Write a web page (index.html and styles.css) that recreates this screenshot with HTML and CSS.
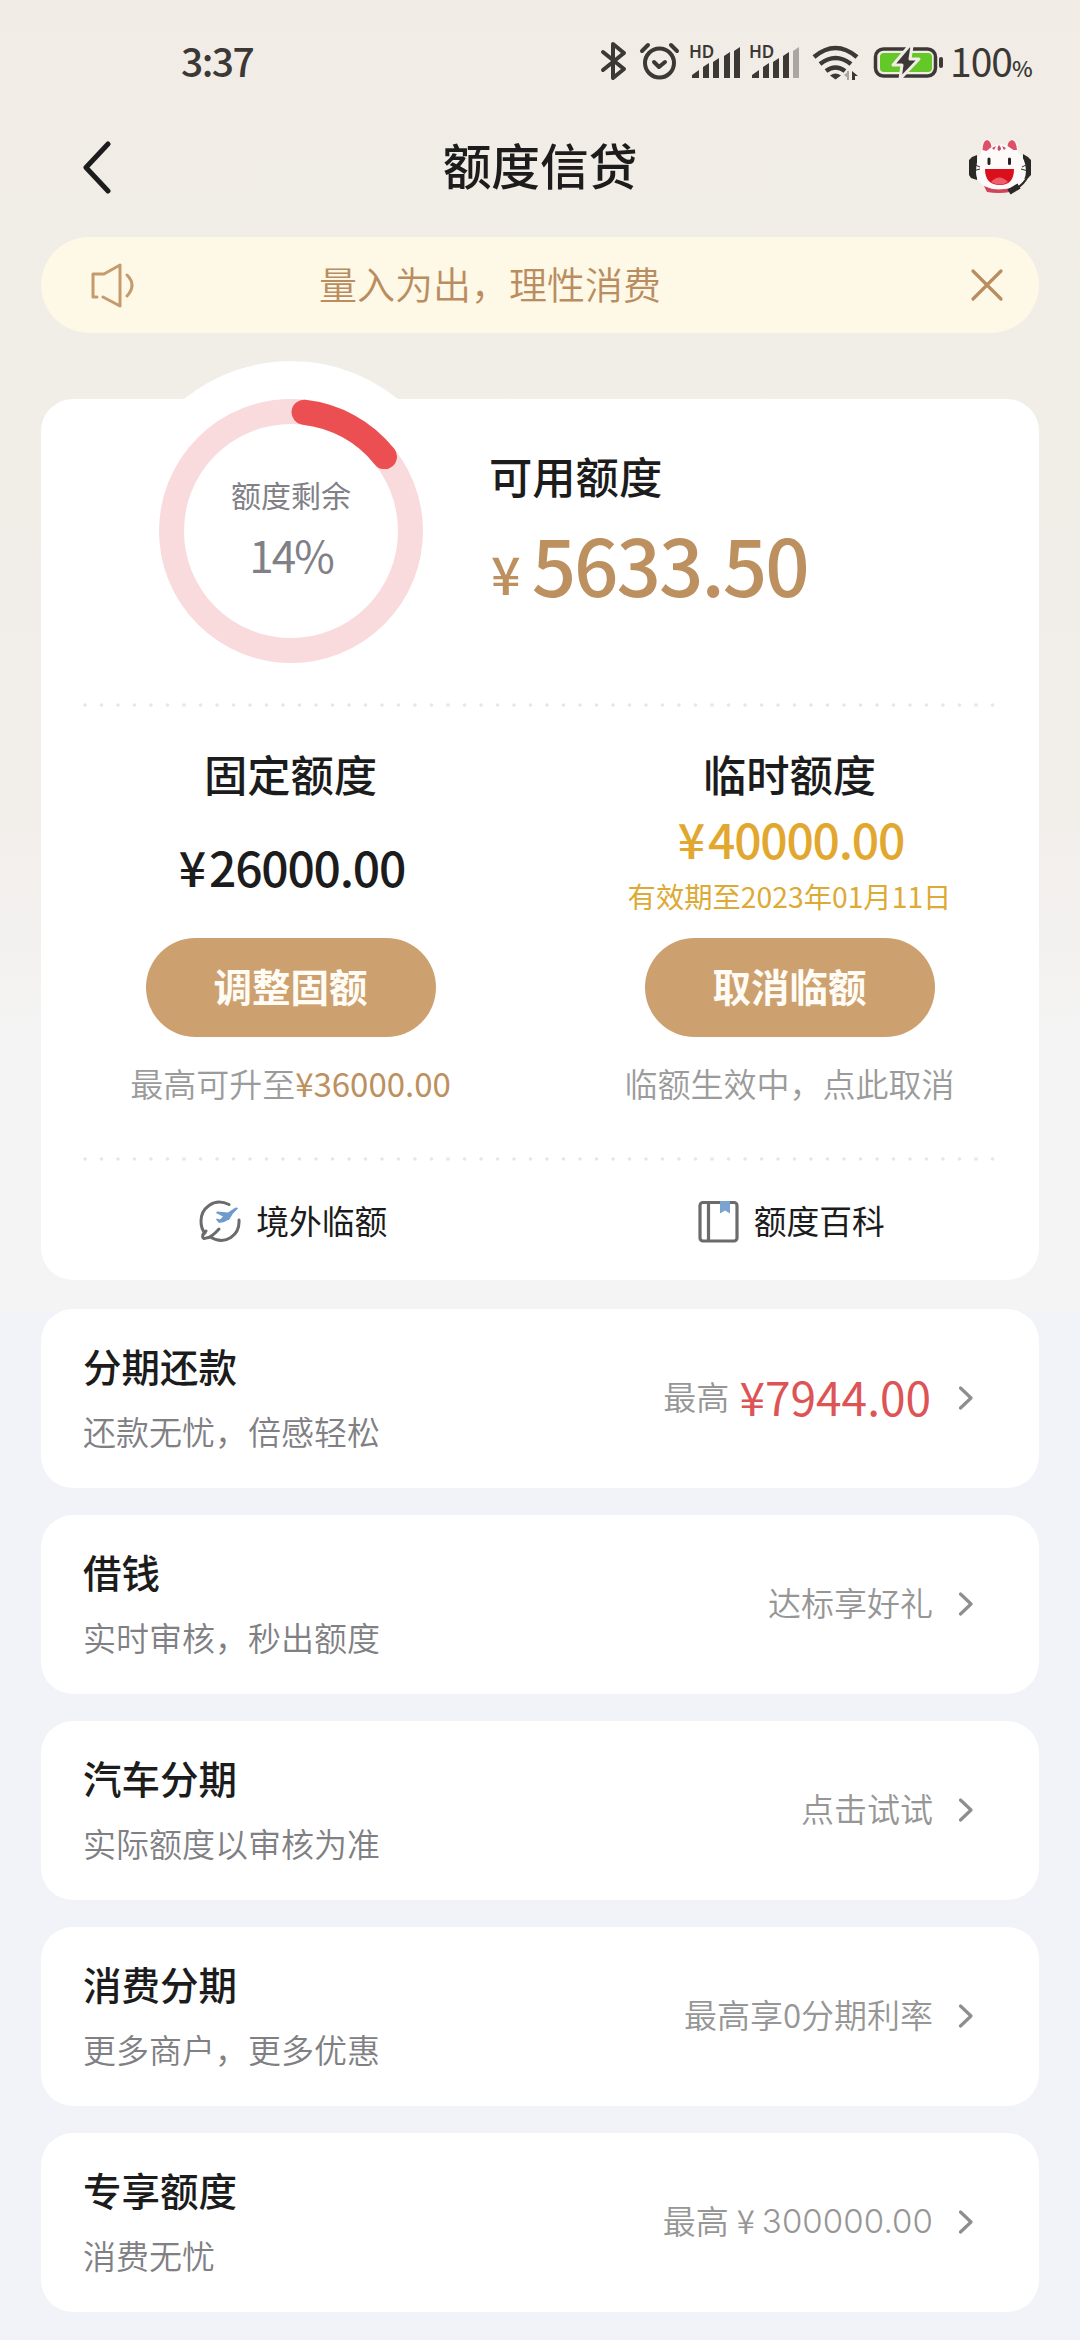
FILE: index.html
```html
<!DOCTYPE html>
<html lang="zh-CN">
<head>
<meta charset="utf-8">
<title>额度信贷</title>
<link rel="stylesheet" href="styles.css">
</head>
<body>
<div class="page">
  <header class="status">
    <span class="time">3:37</span>
    <div class="status-icons">
      <svg class="status-svg" width="352" height="44" viewBox="0 0 352 44" fill="none" stroke="#3c3835" stroke-linecap="round" stroke-linejoin="round">
        <path d="M3 12 24 29 13 38V4L24 13 3 30" stroke-width="4"/>
        <g stroke-width="4"><circle cx="59.500" cy="23" r="14.500"/><path d="M54 22l5 5 6-5M42 11l6-6M77 11l-6-6"/></g>
        <g fill="#3c3835" stroke="none">
          <path d="M92 38v-3l7-5v8zM103 38V27l6-4v15zM113 38V22l6-4v20zM124 38V16l6-4v26zM134 38V11l6-4v31z"/>
          <path d="M152 38v-3l7-5v8zM163 38V27l6-4v15zM173 38V22l6-4v20zM183 38V16l6-4v26z"/>
          <path d="M193 38V11l6-4v31z" fill="#aba6a2"/>
          <text class="hd" x="89" y="18">HD</text><text class="hd" x="149" y="18">HD</text>
        </g>
        <g stroke-width="4.500" stroke-linecap="butt">
          <path d="M214 17q21.500-18 43 0M220 24q15.500-12 31 0M226 31q9.500-7 19 0"/>
        </g>
        <path d="M230 35.500q5.500-4 11 0l-5.500 4z" fill="#3c3835" stroke="none"/>
        <path d="M249 31v8l-5-4zM247 31h2v9h-2z" fill="#aba6a2" stroke="none"/>
        <path d="M252 40v-9l6 5h-3v4z" fill="#3c3835" stroke="none"/>
        <rect x="275.500" y="9" width="60" height="27" rx="8" stroke-width="3.500"/>
        <rect x="280" y="13" width="52" height="19" rx="4" fill="#64c828" stroke="none"/>
        <path d="M309 6l-16 19h9l-2 14 19-20h-9l2-13z" fill="#3c3835" stroke="#f1ece6" stroke-width="3"/>
        <path d="M341 19v7" stroke-width="4"/>
      </svg>
      <span class="battery">100<small>%</small></span>
    </div>
  </header>

  <nav class="nav">
    <svg class="back" width="30" height="54" viewBox="0 0 30 54" fill="none" stroke="#1c1c1c" stroke-width="5" stroke-linecap="round" stroke-linejoin="round"><path d="M26 4 4 27.500 26 51"/></svg>
    <h1>额度信贷</h1>
    <svg class="cat" width="66" height="58" viewBox="0 0 66 58">
      <path d="M9 17v25l-6-2-2-3V22l3-3zM55 16l5 3 3 3v15l-3 3-5 1z" fill="#2b2928"/>
      <path d="M16 48q15 7 29 0l-3 6q-11 2-23 0z" fill="#cf4458"/>
      <path d="M13 15Q13 1 19 1q5 1 5 7 8-3 15-1 2-6 6-6 5 1 5 13 8 7 8 19 0 18-25 18T8 34q0-12 5-19z" fill="#fdfaf9"/>
      <path d="M14.500 12Q15 2 19 2q4 1 4.500 7l-5 4zM49 12q-1-10-5-10-4 1-4.500 6l6 4z" fill="#dd5068"/>
      <path d="M31 7q-3 4 0 6 4-2 0-6zM24 10l4-2-2 4zM38 10l-4-2 2 4z" fill="#ca4961"/>
      <path d="M17 31h29q0 16-14 16-15 0-15-16z" fill="#d90f1d"/>
      <path d="M23 44q8-9 17 0-8 5-17 0z" fill="#ef5d6b"/>
      <path d="M21 21v4.500M41.500 21v4.500" stroke="#222" stroke-width="3" stroke-linecap="round"/>
      <path d="M5 26l7 3M5 33l7-2M60 26l-6 3M60 33l-7-2" stroke="#302b2a" stroke-width="1"/>
      <path d="M60 38q-4 8-11 12" fill="none" stroke="#2b2928" stroke-width="2"/>
      <path d="M51 48l-10 6" stroke="#2b2928" stroke-width="6"/>
    </svg>
  </nav>

  <div class="notice">
    <svg class="speaker" width="48" height="46" viewBox="0 0 48 46" fill="none" stroke="#c59b6d" stroke-width="3" stroke-linecap="round" stroke-linejoin="round"><path d="M9 35H5V12h11L32 3v41L15 35M39 13q10 10 0 21"/></svg>
    <p>量入为出，理性消费</p>
    <svg class="close" width="34" height="34" viewBox="0 0 34 34" fill="none" stroke="#b98d60" stroke-width="3.200" stroke-linecap="round"><path d="M3 3l28 28M31 3 3 31"/></svg>
  </div>

  <main class="card">
    <section class="summary">
      <div class="gauge">
        <svg width="264" height="264" viewBox="0 0 264 264" fill="none" stroke-width="25"><circle cx="132" cy="132" r="119.500" stroke="#f9dbdd"/><path d="M145 13.200A119.500 119.500 0 0 1 225.500 57.600" stroke="#ec4f51" stroke-linecap="round"/></svg>
        <div class="gauge-label"><span>额度剩余</span><b>14%</b></div>
      </div>
      <div class="available">
        <h2>可用额度</h2>
        <p><span class="yen">¥</span>5633.50</p>
      </div>
    </section>
    <svg class="dots" width="912" height="4" viewBox="0 0 912 4"><path d="M2 2H912" stroke="#e6e6e6" stroke-width="3.500" stroke-linecap="round" stroke-dasharray="0 16.500"/></svg>
    <section class="limits">
      <div class="limit">
        <h2>固定额度</h2>
        <p class="amount"><span>¥</span>26000.00</p>
        <button>调整固额</button>
        <p class="hint">最高可升至<em>¥36000.00</em></p>
      </div>
      <div class="limit temp">
        <h2>临时额度</h2>
        <p class="amount"><span>¥</span>40000.00</p>
        <p class="valid">有效期至<i>2023</i>年<i>01</i>月<i>11</i>日</p>
        <button>取消临额</button>
        <p class="hint">临额生效中，点此取消</p>
      </div>
    </section>
    <svg class="dots" width="912" height="4" viewBox="0 0 912 4"><path d="M2 2H912" stroke="#e6e6e6" stroke-width="3.500" stroke-linecap="round" stroke-dasharray="0 16.500"/></svg>
    <section class="links">
      <a><svg width="44" height="44" viewBox="0 0 44 44" fill="none" stroke="#6b6b6b" stroke-width="3" stroke-linecap="round" stroke-linejoin="round"><path d="M31 5.500C15-2 3 10 3 22q0 8 4 12M8 32c-5 4-4 9 0 7q5 0 13-9M12 38C28 47 42 36 41 21"/><path d="M40 9.500q-1-2-4 0l-6 4-11-1-1 1.500 7 3.500-3 3-3-1-1 1 3 3.500q5 0 9-3l1 0 4-6.500z" fill="#6d9bcd" stroke="none"/></svg><span>境外临额</span></a>
      <a><svg width="44" height="44" viewBox="0 0 44 44" fill="none" stroke="#6b6b6b" stroke-width="3.200"><rect x="4" y="3.500" width="37" height="38.500" rx="3"/><path d="M12.500 4v38"/><path d="M24 2h10v12.500l-5-3-5 3z" fill="#7ba3d0" stroke="none"/></svg><span>额度百科</span></a>
    </section>
  </main>

  <div class="list">
    <a class="item"><div class="text"><h3>分期还款</h3><p>还款无忧，倍感轻松</p></div><div class="value">最高 <strong>¥7944.00</strong></div><svg class="arrow" viewBox="0 0 16 26"><path d="M1.500 3 12 13 1.500 23"/></svg></a>
    <a class="item"><div class="text"><h3>借钱</h3><p>实时审核，秒出额度</p></div><div class="value">达标享好礼</div><svg class="arrow" viewBox="0 0 16 26"><path d="M1.500 3 12 13 1.500 23"/></svg></a>
    <a class="item"><div class="text"><h3>汽车分期</h3><p>实际额度以审核为准</p></div><div class="value">点击试试</div><svg class="arrow" viewBox="0 0 16 26"><path d="M1.500 3 12 13 1.500 23"/></svg></a>
    <a class="item"><div class="text"><h3>消费分期</h3><p>更多商户，更多优惠</p></div><div class="value">最高享0分期利率</div><svg class="arrow" viewBox="0 0 16 26"><path d="M1.500 3 12 13 1.500 23"/></svg></a>
    <a class="item"><div class="text"><h3>专享额度</h3><p>消费无忧</p></div><div class="value">最高<span class="wide-yen">¥</span><span class="wide">300000.00</span></div><svg class="arrow" viewBox="0 0 16 26"><path d="M1.500 3 12 13 1.500 23"/></svg></a>
  </div>
</div>
</body>
</html>
```
FILE: styles.css
```css
* { box-sizing: border-box; }
body, h1, h2, h3, p { margin: 0; }
body {
  width: 1080px;
  height: 2340px;
  overflow: hidden;
  font-family: "Noto Sans CJK SC", sans-serif;
  color: #1c1c1c;
  background: #f2f3f8;
}
svg { display: block; flex: none; }
i, em, b { font-style: normal; font-weight: 400; }
.page {
  height: 2340px;
  background: linear-gradient(#f1ece6 0, #f1ede7 420px, #f2eeea 800px, #f4f4f4 1050px, #f4f4f4 1312px, #f2f3f8 1312px);
}

.status { height: 124px; display: flex; justify-content: space-between; padding: 40px 45px 0 181px; color: #3c3835; }
.time { font-size: 39px; line-height: 40px; font-weight: 500; letter-spacing: -1.500px; }
.status-icons { display: flex; }
.hd { font: 600 17px "Noto Sans", sans-serif; }
.battery { font-size: 39px; line-height: 40px; width: 85px; margin-left: -2px; letter-spacing: -1px; }
.battery small { font-size: 22px; font-weight: 500; }
.status-svg { margin-left: -4px; }

.nav { height: 113px; display: flex; align-items: center; justify-content: space-between; padding: 0 46px 28px 82px; }
.nav h1 { font-size: 48.700px; line-height: 60px; padding-bottom: 5px; font-weight: 500; }

.notice { height: 96px; margin: 0 41px; padding: 0 35px 0 47px; border-radius: 48px; background: #fef8e7; display: flex; align-items: center; color: #b98d60; }
.notice p { flex: 1; font-size: 38px; line-height: 50px; padding: 0 0 4px 183px; font-weight: 350; }

.card { height: 881px; margin: 66px 41px 0; border-radius: 32px; background: #fff; }
.summary { height: 304px; display: flex; }
.gauge { position: relative; width: 340px; height: 340px; margin: -38px 0 0 80px; padding: 38px; border-radius: 50%; background: #fff; }
.gauge-label { position: absolute; inset: 0; display: flex; flex-direction: column; align-items: center; padding-top: 111px; color: #808086; }
.gauge-label span { font-size: 30px; line-height: 44px; }
.gauge-label b { font-size: 44px; line-height: 60px; margin-top: 8px; letter-spacing: -2px; }
.available { padding: 44px 0 0 28px; }
.available h2 { font-size: 43.300px; line-height: 64px; font-weight: 500; }
.available p { font-size: 78px; line-height: 100px; margin-top: 6px; letter-spacing: -2px; font-weight: 500; color: #bd9060; }
.available .yen { font-size: 52px; margin: 0 13px 0 2px; vertical-align: 2px; line-height: 1; }
.dots { margin: 0 0 0 42px; }

.limits { height: 450px; display: flex; }
.limit { flex: 1; display: flex; flex-direction: column; align-items: center; }
.limit h2 { font-size: 43.300px; line-height: 64px; margin-top: 34px; font-weight: 500; }
.limit .amount { font-size: 48px; line-height: 60px; height: 133px; padding: 31px 0 0 3px; font-weight: 500; letter-spacing: -1.200px; }
.limit .amount span { margin-right: 4px; }
.temp .amount { height: 63px; padding-top: 3px; color: #e2a72e; }
.valid { height: 70px; font-size: 28.300px; line-height: 50px; padding-top: 3px; color: #dcaa35; }
button { width: 290px; height: 99px; border: 0; padding: 0 0 5px; border-radius: 50px; background: #cda16f; color: #fffcf5; font: 700 38.500px/94px "Noto Sans CJK SC", sans-serif; }
.hint { font-size: 33px; line-height: 50px; margin-top: 21px; color: #9b9b9b; font-weight: 350; }
.hint em { color: #bd9060; }

.links { display: flex; height: 122px; padding: 0 0 2px 3px; }
.links a { flex: 1; display: flex; align-items: center; justify-content: center; gap: 14px; font-size: 32.800px; }
.links span { padding-bottom: 3px; }

.list { padding: 29px 41px 0; display: flex; flex-direction: column; gap: 27px; }
.item { height: 179px; border-radius: 32px; background: #fff; display: flex; align-items: center; padding: 0 64px 1px 42px; }
.text { flex: 1; padding-bottom: 4px; }
.item h3 { font-size: 38.500px; line-height: 56px; font-weight: 500; }
.item p { font-size: 33px; line-height: 48px; margin-top: 14px; color: #808084; font-weight: 350; }
.value { font-size: 33px; line-height: 60px; padding-bottom: 5px; color: #969696; display: flex; align-items: center; white-space: pre; font-weight: 350; }
.value strong { font-size: 46px; font-weight: 400; color: #dc5455; margin: 0 2px 0 3px; }
.wide-yen { margin: 0 7px 0 8px; }
.wide { font-family: Inter, sans-serif; font-size: 33px; letter-spacing: .1px; padding-top: 2px; }
.arrow { width: 16px; height: 26px; margin-left: 26px; fill: none; stroke: #8e8e8e; stroke-width: 3.200; stroke-linecap: round; stroke-linejoin: round; }
```
